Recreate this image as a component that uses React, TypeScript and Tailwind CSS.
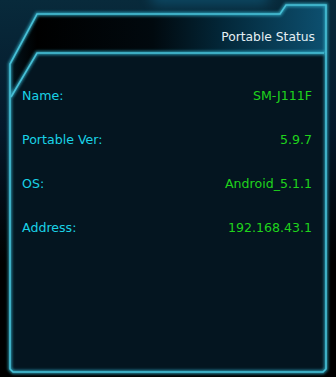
import React from "react";

const rows = [
  { label: "Name:", value: "SM-J111F" },
  { label: "Portable Ver:", value: "5.9.7" },
  { label: "OS:", value: "Android_5.1.1" },
  { label: "Address:", value: "192.168.43.1" },
];

function Frame() {
  return (
    <svg className="absolute inset-0" width="336" height="377" viewBox="0 0 336 377">
      <defs>
        <linearGradient id="hdr" x1="0" y1="0" x2="1" y2="0">
          <stop offset="0" stopColor="#000000" />
          <stop offset="0.4" stopColor="#01090e" />
          <stop offset="0.65" stopColor="#03283a" />
          <stop offset="1" stopColor="#0d5070" />
        </linearGradient>
        <linearGradient id="slant" x1="0" y1="0" x2="1" y2="0">
          <stop offset="0" stopColor="#02121b" />
          <stop offset="1" stopColor="#000000" />
        </linearGradient>
        <filter id="glow" x="-10%" y="-10%" width="120%" height="120%">
          <feGaussianBlur stdDeviation="1.6" />
        </filter>
      </defs>
      {/* body */}
      <path d="M13 372 L323 372 L326 369 L326 5 L286 5 L280 14 L37 14 L10 64 L10 369 Z" fill="#041520" />
      {/* header band */}
      <path d="M37 14 L280 14 L286 5 L326 5 L326 53 L37 53 Z" fill="url(#hdr)" />
      <path d="M37 14 L37 53 L11 97 L10 64 Z" fill="url(#slant)" />
      {/* glow */}
      <g filter="url(#glow)" stroke="#2fa9c2" strokeWidth="3.4" fill="none" opacity="0.9">
        <path d="M13 372 L323 372 L326 369 L326 5 L286 5 L280 14 L37 14 L10 64 L10 369 Z" />
        <path d="M326 53 L37 53 L11 97" />
      </g>
      <g stroke="#48c0d6" strokeWidth="1.6" fill="none">
        <path d="M13 372 L323 372 L326 369 L326 5 L286 5 L280 14 L37 14 L10 64 L10 369 Z" />
        <path d="M324 53 L37 53 L11 97" />
      </g>
    </svg>
  );
}

export default function App() {
  return (
    <div
      className="relative h-[377px] w-[336px] overflow-hidden bg-[linear-gradient(to_bottom,#082a3b_0%,#04182a_35%,#000000_70%)]"
      style={{ fontFamily: '"DejaVu Sans", Verdana, sans-serif' }}
    >
      <div className="absolute left-[150px] top-[-14px] h-[20px] w-[120px] rounded-full bg-[#0e5270] opacity-70 blur-[6px]" />
      <Frame />
      <div className="relative flex flex-col">
        <div className="pr-[21px] pt-[29px] text-right text-[12.3px] leading-[16px] text-[#e4eff4]">Portable Status</div>
        <div className="mt-[43px] flex flex-col gap-[28px] pl-[22px] pr-[24px]">
          {rows.map((r) => (
            <div key={r.label} className="flex h-[16px] items-center justify-between text-[12.6px] leading-[16px]">
              <span className="text-[#1ad2e6]">{r.label}</span>
              <span className="text-[#1fd31c]">{r.value}</span>
            </div>
          ))}
        </div>
      </div>
    </div>
  );
}
